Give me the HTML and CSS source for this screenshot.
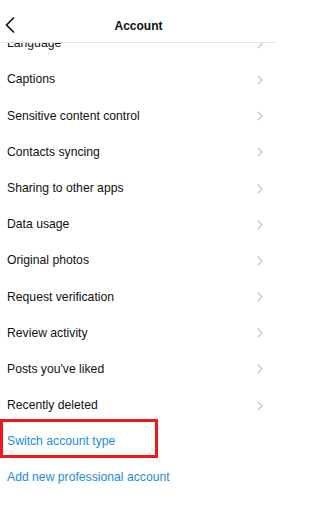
FILE: index.html
```html
<!DOCTYPE html>
<html>
<head>
<meta charset="utf-8">
<link rel="stylesheet" href="styles.css">
</head>
<body>
<div class="screen">
  <header class="topbar">
    <svg class="back" viewBox="0 0 10 16" width="10" height="16"><path d="M8.5 1 L1.5 8 L8.5 15" fill="none" stroke="#111" stroke-width="1.7" stroke-linecap="round" stroke-linejoin="round"/></svg>
    <div class="title">Account</div>
  </header>
  <ul class="list">
    <li class="row"><span>Language</span><svg class="chev" viewBox="0 0 6 10" width="6" height="10"><path d="M1 1 L5 5 L1 9" fill="none" stroke="#c4c4c8" stroke-width="1.1" stroke-linecap="round" stroke-linejoin="round"/></svg></li>
    <li class="row"><span>Captions</span><svg class="chev" viewBox="0 0 6 10" width="6" height="10"><path d="M1 1 L5 5 L1 9" fill="none" stroke="#c4c4c8" stroke-width="1.1" stroke-linecap="round" stroke-linejoin="round"/></svg></li>
    <li class="row"><span>Sensitive content control</span><svg class="chev" viewBox="0 0 6 10" width="6" height="10"><path d="M1 1 L5 5 L1 9" fill="none" stroke="#c4c4c8" stroke-width="1.1" stroke-linecap="round" stroke-linejoin="round"/></svg></li>
    <li class="row"><span>Contacts syncing</span><svg class="chev" viewBox="0 0 6 10" width="6" height="10"><path d="M1 1 L5 5 L1 9" fill="none" stroke="#c4c4c8" stroke-width="1.1" stroke-linecap="round" stroke-linejoin="round"/></svg></li>
    <li class="row"><span>Sharing to other apps</span><svg class="chev" viewBox="0 0 6 10" width="6" height="10"><path d="M1 1 L5 5 L1 9" fill="none" stroke="#c4c4c8" stroke-width="1.1" stroke-linecap="round" stroke-linejoin="round"/></svg></li>
    <li class="row"><span>Data usage</span><svg class="chev" viewBox="0 0 6 10" width="6" height="10"><path d="M1 1 L5 5 L1 9" fill="none" stroke="#c4c4c8" stroke-width="1.1" stroke-linecap="round" stroke-linejoin="round"/></svg></li>
    <li class="row"><span>Original photos</span><svg class="chev" viewBox="0 0 6 10" width="6" height="10"><path d="M1 1 L5 5 L1 9" fill="none" stroke="#c4c4c8" stroke-width="1.1" stroke-linecap="round" stroke-linejoin="round"/></svg></li>
    <li class="row"><span>Request verification</span><svg class="chev" viewBox="0 0 6 10" width="6" height="10"><path d="M1 1 L5 5 L1 9" fill="none" stroke="#c4c4c8" stroke-width="1.1" stroke-linecap="round" stroke-linejoin="round"/></svg></li>
    <li class="row"><span>Review activity</span><svg class="chev" viewBox="0 0 6 10" width="6" height="10"><path d="M1 1 L5 5 L1 9" fill="none" stroke="#c4c4c8" stroke-width="1.1" stroke-linecap="round" stroke-linejoin="round"/></svg></li>
    <li class="row"><span>Posts you've liked</span><svg class="chev" viewBox="0 0 6 10" width="6" height="10"><path d="M1 1 L5 5 L1 9" fill="none" stroke="#c4c4c8" stroke-width="1.1" stroke-linecap="round" stroke-linejoin="round"/></svg></li>
    <li class="row"><span>Recently deleted</span><svg class="chev" viewBox="0 0 6 10" width="6" height="10"><path d="M1 1 L5 5 L1 9" fill="none" stroke="#c4c4c8" stroke-width="1.1" stroke-linecap="round" stroke-linejoin="round"/></svg></li>
    <li class="row link highlighted"><span>Switch account type</span><b class="mark"></b></li>
    <li class="row link"><span>Add new professional account</span></li>
  </ul>
</div>
</body>
</html>
```
FILE: styles.css
```css
html, body {
  margin: 0;
  padding: 0;
  background: #fff;
}
.screen {
  position: relative;
  width: 276px;
  height: 516px;
  overflow: hidden;
  font-family: "Liberation Sans", Arial, sans-serif;
  color: #111;
}
.topbar {
  position: absolute;
  top: 0;
  left: 0;
  right: 0;
  height: 42px;
  background: #fff;
  border-bottom: 1px solid #e4e4e4;
  z-index: 2;
}
.back {
  position: absolute;
  left: 5px;
  top: 17px;
}
.title {
  text-align: center;
  font-weight: bold;
  font-size: 12px;
  line-height: 12px;
  padding-top: 20px;
  padding-left: 1px;
}
.list {
  list-style: none;
  margin: 0;
  padding: 25.2px 0 0 0;
}
.row {
  position: relative;
  display: flex;
  align-items: center;
  justify-content: space-between;
  height: 36.2px;
  line-height: 36.2px;
  font-size: 12.2px;
  padding: 0 13px 0 7px;
}
.chev {
  display: block;
  margin-top: 1px;
}
.link {
  color: #1c8be0;
}
.mark {
  position: absolute;
  left: 0;
  top: -4.7px;
  width: 152px;
  height: 33.5px;
  border: 3px solid #f01818;
}
```
